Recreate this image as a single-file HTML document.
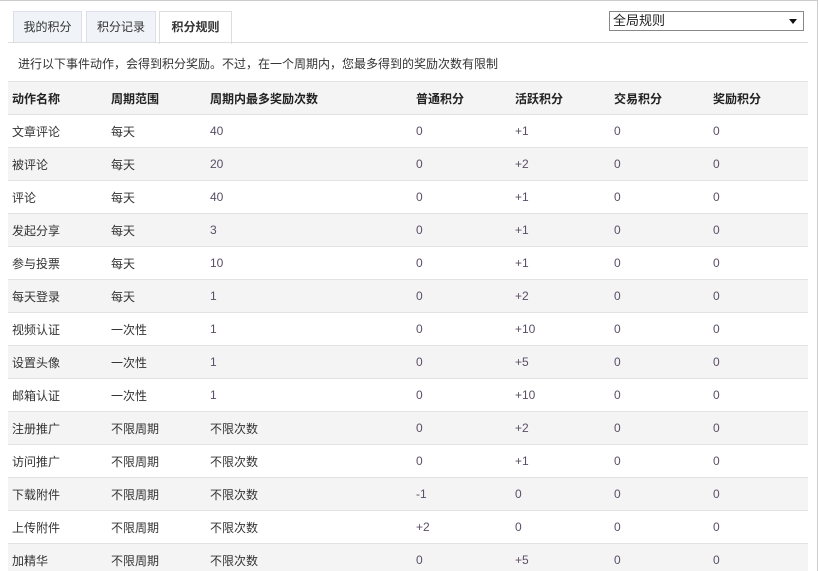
<!DOCTYPE html>
<html><head><meta charset="utf-8"><style>
html,body{margin:0;width:819px;height:571px;overflow:hidden}
body{background:#fff;font-family:"Liberation Sans","Noto Sans CJK SC",sans-serif;font-size:12px;color:#333;position:relative}
.frame{position:absolute;left:0;top:0;width:817px;height:570px;border-top:1px solid #ccc;border-right:1px solid #ccc}
.tabline{position:absolute;left:8px;top:42px;width:800px;height:1px;background:#ddd}
.tab{position:absolute;top:11px;height:31px;line-height:31px;text-align:center;background:#f0f4f8;border:1px solid #dde;border-bottom:none;box-sizing:border-box}
.tab.act{background:#fff;font-weight:bold;height:33px;border-color:#ddd}
.sel{position:absolute;left:609px;top:11px;width:195px;height:20px;border:1px solid #888;box-sizing:border-box;font-size:13px;line-height:18px;padding-left:3px;color:#222}
.sel:after{content:"";position:absolute;right:6px;top:7px;border-left:4px solid transparent;border-right:4px solid transparent;border-top:5px solid #111}
.intro{position:absolute;left:18px;top:55px;font-size:12px;color:#333}
table{position:absolute;left:8px;top:81px;width:800px;border-collapse:collapse}
td,th{height:32px;border-top:1px solid #e2e2e2;padding:0 0 0 4px;text-align:left;font-size:12px;font-weight:normal}
th{font-weight:bold;background:#f4f4f4;color:#222}
tr:nth-child(odd) td{background:#f4f4f4}
td.n{color:#5a4e66}
</style></head><body>
<div class="frame"></div>
<div class="tab" style="left:13px;width:69px">我的积分</div>
<div class="tab" style="left:86px;width:70px">积分记录</div>
<div class="tab act" style="left:159px;width:73px">积分规则</div>
<div class="tabline"></div>
<div class="sel">全局规则</div>
<div class="intro">进行以下事件动作，会得到积分奖励。不过，在一个周期内，您最多得到的奖励次数有限制</div>
<table>
<colgroup><col style="width:99px"><col style="width:99px"><col style="width:206px"><col style="width:99px"><col style="width:99px"><col style="width:99px"><col style="width:99px"></colgroup>
<tr><th>动作名称</th><th>周期范围</th><th>周期内最多奖励次数</th><th>普通积分</th><th>活跃积分</th><th>交易积分</th><th>奖励积分</th></tr>
<tr><td>文章评论</td><td>每天</td><td class="n">40</td><td class="n">0</td><td class="n">+1</td><td class="n">0</td><td class="n">0</td></tr>
<tr><td>被评论</td><td>每天</td><td class="n">20</td><td class="n">0</td><td class="n">+2</td><td class="n">0</td><td class="n">0</td></tr>
<tr><td>评论</td><td>每天</td><td class="n">40</td><td class="n">0</td><td class="n">+1</td><td class="n">0</td><td class="n">0</td></tr>
<tr><td>发起分享</td><td>每天</td><td class="n">3</td><td class="n">0</td><td class="n">+1</td><td class="n">0</td><td class="n">0</td></tr>
<tr><td>参与投票</td><td>每天</td><td class="n">10</td><td class="n">0</td><td class="n">+1</td><td class="n">0</td><td class="n">0</td></tr>
<tr><td>每天登录</td><td>每天</td><td class="n">1</td><td class="n">0</td><td class="n">+2</td><td class="n">0</td><td class="n">0</td></tr>
<tr><td>视频认证</td><td>一次性</td><td class="n">1</td><td class="n">0</td><td class="n">+10</td><td class="n">0</td><td class="n">0</td></tr>
<tr><td>设置头像</td><td>一次性</td><td class="n">1</td><td class="n">0</td><td class="n">+5</td><td class="n">0</td><td class="n">0</td></tr>
<tr><td>邮箱认证</td><td>一次性</td><td class="n">1</td><td class="n">0</td><td class="n">+10</td><td class="n">0</td><td class="n">0</td></tr>
<tr><td>注册推广</td><td>不限周期</td><td>不限次数</td><td class="n">0</td><td class="n">+2</td><td class="n">0</td><td class="n">0</td></tr>
<tr><td>访问推广</td><td>不限周期</td><td>不限次数</td><td class="n">0</td><td class="n">+1</td><td class="n">0</td><td class="n">0</td></tr>
<tr><td>下载附件</td><td>不限周期</td><td>不限次数</td><td class="n">-1</td><td class="n">0</td><td class="n">0</td><td class="n">0</td></tr>
<tr><td>上传附件</td><td>不限周期</td><td>不限次数</td><td class="n">+2</td><td class="n">0</td><td class="n">0</td><td class="n">0</td></tr>
<tr><td>加精华</td><td>不限周期</td><td>不限次数</td><td class="n">0</td><td class="n">+5</td><td class="n">0</td><td class="n">0</td></tr>
</table>
</body></html>
